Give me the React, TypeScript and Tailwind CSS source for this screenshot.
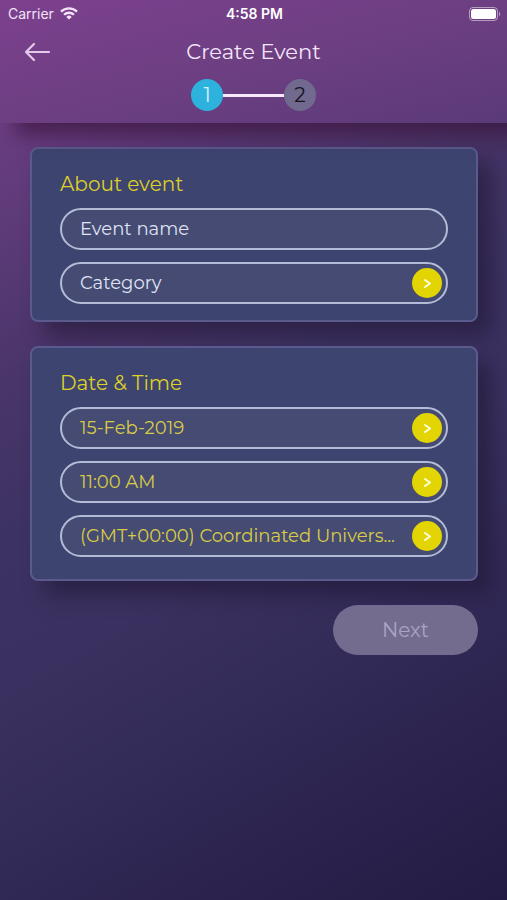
import { useState } from 'react';

function WifiIcon() {
  return (
    <svg viewBox="0 0 18 13" className="h-[13px] w-[18px]" fill="none" stroke="currentColor" strokeWidth="2.3" aria-hidden="true">
      <path d="M1 4.6a11.3 11.3 0 0 1 16 0" />
      <path d="M4 7.8a7.1 7.1 0 0 1 10 0" />
      <path d="M9 12.6 6.3 9.9a3.8 3.8 0 0 1 5.4 0z" fill="currentColor" stroke="none" />
    </svg>
  );
}

function BatteryIcon() {
  return (
    <svg viewBox="0 0 32 14" className="h-[14px] w-8" fill="none" aria-hidden="true">
      <rect x="0.5" y="0.5" width="28" height="13" rx="3.5" stroke="white" strokeOpacity="0.5" />
      <rect x="2" y="2" width="25" height="10" rx="2.5" fill="white" />
      <path d="M30 4.8c1.7.7 1.7 3.7 0 4.4z" fill="white" fillOpacity="0.5" />
    </svg>
  );
}

function StatusBar() {
  return (
    <div className="grid grid-cols-3 items-center pl-2 pr-1.5 h-[27px] text-white font-['Inter',sans-serif]">
      <div className="flex items-center gap-1.5 text-sm text-[#f3e2f8]">
        Carrier
        <WifiIcon />
      </div>
      <div className="text-center text-sm font-semibold">4:58 PM</div>
      <div className="flex justify-end">
        <BatteryIcon />
      </div>
    </div>
  );
}

function Header() {
  return (
    <header className="relative bg-linear-to-br from-[#7d408e] via-[#6d3f82] to-[#5b3a79] shadow-[16px_12px_18px_rgba(58,20,60,0.7)]">
      <StatusBar />
      <div className="grid grid-cols-[32px_1fr_32px] items-center px-6 h-[50px]">
        <button type="button" aria-label="Back" className="text-[#e4c9ec]">
          <svg viewBox="0 0 28 20" className="h-5 w-7" fill="none" stroke="currentColor" strokeWidth="2.2" strokeLinecap="round" strokeLinejoin="round">
            <path d="M25 10H2M10 2 2 10l8 8" />
          </svg>
        </button>
        <h1 className="text-center text-[21px] text-[#f5e6fa]">Create Event</h1>
      </div>
      <ol className="flex items-center justify-center pb-2.5 h-[46px] text-xl">
        <li aria-current="step" className="flex size-8 items-center justify-center rounded-full bg-[#2cb2dc] text-[#d5f3fc]">1</li>
        <li aria-hidden="true" className="h-[3px] w-[61px] bg-[#f7e8fb]" />
        <li className="flex size-8 items-center justify-center rounded-full bg-[#71698e] text-[#15121d]">2</li>
      </ol>
    </header>
  );
}

function Card({ title, className, children }: { title: string; className: string; children: React.ReactNode }) {
  return (
    <section className={`rounded-lg border-2 border-[#5a5a8c] bg-[#3d446f] px-7 pt-[23px] shadow-[14px_14px_20px_rgba(34,24,54,0.6)] ${className}`}>
      <h2 className="text-xl leading-6 text-[#ddd027]">{title}</h2>
      <div className="mt-3 flex flex-col gap-3">{children}</div>
    </section>
  );
}

function PickerField({ label, value }: { label: string; value?: string }) {
  return (
    <button
      type="button"
      aria-label={value ? `${label}: ${value}` : label}
      className="flex h-[42px] w-full items-center rounded-full border-2 border-[#b4bbd6] bg-[#464b73] pl-[18px] pr-1 text-left"
    >
      <span className={`flex-1 whitespace-nowrap text-lg ${value ? 'text-[#d8cc45]' : 'text-[#dfe3f3]'}`}>
        {value ?? label}
      </span>
      <span className="flex size-[30px] shrink-0 items-center justify-center rounded-full bg-[#e2d503]">
        <svg viewBox="0 0 8 10" className="h-2.5 w-2" fill="none" stroke="#fffde0" strokeWidth="2" strokeLinecap="round" strokeLinejoin="round">
          <path d="m2 2 5 3.5-5 3.5" />
        </svg>
      </span>
    </button>
  );
}

export default function App() {
  const [name, setName] = useState('');

  return (
    <div className="min-h-screen bg-[linear-gradient(150deg,#7b408b_0%,#633c7d_15%,#4a3569_32%,#3d3363_45%,#3a3160_58%,#2f2753_78%,#231b43_100%)] font-['Montserrat','Inter',sans-serif]">
      <Header />
      <main className="flex flex-col gap-6 pl-[30px] pr-[29px] pt-6">
        <Card title="About event" className="pb-4">
          <input
            type="text"
            aria-label="Event name"
            placeholder="Event name"
            value={name}
            onChange={(e) => setName(e.target.value)}
            className="h-[42px] w-full rounded-full border-2 border-[#b4bbd6] bg-[#464b73] px-[18px] text-lg text-[#dfe3f3] placeholder:text-[#dfe3f3] outline-none"
          />
          <PickerField label="Category" />
        </Card>
        <Card title="Date & Time" className="pb-[22px]">
          <PickerField label="Date" value="15-Feb-2019" />
          <PickerField label="Time" value="11:00 AM" />
          <PickerField label="Time zone" value="(GMT+00:00) Coordinated Univers..." />
        </Card>
        <button
          type="button"
          disabled={!name}
          className="relative h-[50px] w-[145px] self-end rounded-full bg-[#736c8f] text-xl text-white disabled:text-[#aaa3c4]"
        >
          Next
        </button>
      </main>
    </div>
  );
}
